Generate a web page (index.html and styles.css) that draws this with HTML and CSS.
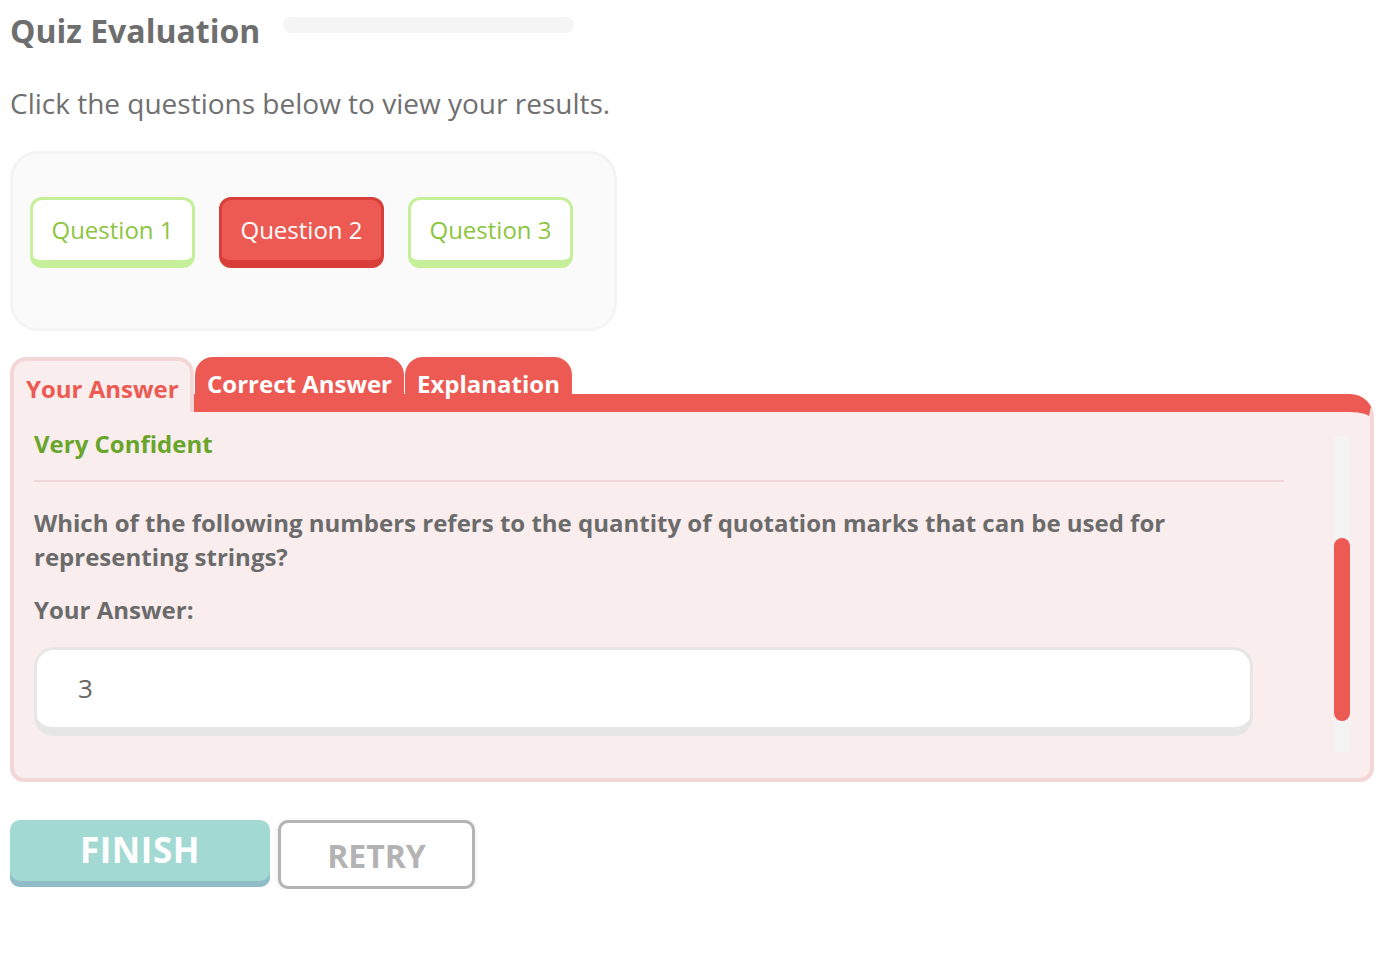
FILE: index.html
```html
<!DOCTYPE html>
<html lang="en">
<head>
<meta charset="utf-8">
<title>Quiz Evaluation</title>
<link rel="stylesheet" href="styles.css">
</head>
<body>
<div class="page">
  <header class="head">
    <h1 class="title">Quiz Evaluation</h1>
    <div class="progress"></div>
  </header>
  <p class="intro">Click the questions below to view your results.</p>

  <section class="qpanel">
    <button class="qbtn qbtn-ok">Question 1</button>
    <button class="qbtn qbtn-bad">Question 2</button>
    <button class="qbtn qbtn-ok">Question 3</button>
  </section>

  <section class="result">
    <div class="tabs">
      <div class="tab tab-active">Your Answer</div>
      <div class="tab tab-red">Correct Answer</div>
      <div class="tab tab-red">Explanation</div>
    </div>
    <div class="panel">
      <div class="panel-content">
        <div class="confidence">Very Confident</div>
        <hr class="divider">
        <p class="question">Which of the following numbers refers to the quantity of quotation marks that can be used for representing strings?</p>
        <div class="label">Your Answer:</div>
        <div class="answer">3</div>
      </div>
      <div class="scroll"><div class="thumb"></div></div>
    </div>
  </section>

  <div class="actions">
    <button class="finish">FINISH</button>
    <button class="retry">RETRY</button>
  </div>
</div>
</body>
</html>
```

FILE: styles.css
```css
* { box-sizing: border-box; }
html, body { margin: 0; padding: 0; background: #ffffff; }
body { font-family: "Open Sans", "Noto Sans", sans-serif; color: #6b6b6b; }

.page { padding: 8px 26px 0 10px; }

.head { display: flex; align-items: flex-start; gap: 23px; height: 50px; }
.title { margin: 0; font-size: 32px; font-weight: 700; line-height: 46px; color: #6e6e6e; }
.progress { margin-top: 9px; width: 291px; height: 16px; border-radius: 8px; background: #f5f5f5; }

.intro { margin: 25px 0 28px; font-size: 28px; line-height: 40px; color: #707070; }

.qpanel {
  width: 607px; height: 180px;
  border: 3px solid #f4f4f4; border-radius: 28px; background: #fafafa;
  padding: 43px 17px 0; display: flex; align-items: flex-start; gap: 24px;
}
.qbtn {
  width: 165px; height: 71px; border-radius: 12px;
  font-family: "Open Sans", "Noto Sans", sans-serif; font-size: 24px; font-weight: 400;
  padding: 0 0 1px; cursor: pointer;
}
.qbtn-ok { background: #ffffff; color: #8cc540; border: 3px solid #c6ef9a; border-bottom-width: 8px; }
.qbtn-bad { background: #ec5a53; color: #ffffff; border: 3px solid #d83f39; border-bottom-width: 8px; }

.result { margin-top: 26px; }
.tabs { display: flex; align-items: flex-end; position: relative; z-index: 1; margin-bottom: -18px; }
.tab { height: 55px; font-size: 24px; font-weight: 700; line-height: 24px; }
.tab-active {
  width: 184px; padding: 16px 0 0 12px; color: #ec5a53;
  background: #f9eded; border: 4px solid #f3d7d6; border-bottom: none;
  border-radius: 16px 16px 0 0;
}
.tab-red {
  padding: 15px 12px 0; color: #ffffff; background: #ec5a53;
  border-radius: 18px 18px 0 0; margin-left: 1px;
}

.panel {
  height: 388px; width: 1364px;
  background: #f9eded;
  border: 4px solid #f3d7d6; border-top: 18px solid #ec5a53;
  border-radius: 0 24px 14px 14px;
  display: flex; padding: 6px 20px 0 20px;
}
.panel-content { flex: 1; padding-right: 50px; }
.confidence { font-size: 24px; font-weight: 700; color: #6aa52b; line-height: 40px; margin-top: 6px; }
.divider { border: none; height: 2px; background: #f2d6d6; margin: 16px 0 24px; }
.question { margin: 0; font-size: 24px; font-weight: 700; line-height: 34px; color: #6b6b6b; }
.label { margin-top: 19px; font-size: 24px; font-weight: 700; line-height: 34px; color: #6b6b6b; }
.answer {
  margin: 20px 31px 0 0; height: 89px;
  background: #ffffff; border: 3px solid #e6e6e6; border-bottom-width: 9px; border-radius: 20px;
  padding: 0 0 0 41px; font-size: 26px; line-height: 77px; color: #666666;
}
.scroll { width: 16px; height: 316px; margin-top: 18px; background: #f3f3f3; position: relative; }
.thumb { position: absolute; left: 0; top: 102px; width: 16px; height: 183px; border-radius: 8px; background: #ec5a53; }

.actions { display: flex; gap: 8px; margin-top: 38px; align-items: flex-start; }
.finish {
  width: 260px; height: 67px; border: none; border-radius: 10px;
  background: #a2d9d3; box-shadow: inset 0 -6px 0 #8fbcc6;
  color: #ffffff; font-family: "Open Sans", "Noto Sans", sans-serif; font-size: 35px; font-weight: 700;
  padding: 0 0 8px; letter-spacing: 0.5px;
}
.retry {
  width: 197px; height: 69px; border: 3px solid #b3b3b3; border-radius: 10px;
  background: #ffffff; color: #b3b3b3; box-shadow: 0 1px 4px rgba(0,0,0,0.12);
  font-family: "Open Sans", "Noto Sans", sans-serif; font-size: 32px; font-weight: 700; padding: 2px 0 0;
}
```
